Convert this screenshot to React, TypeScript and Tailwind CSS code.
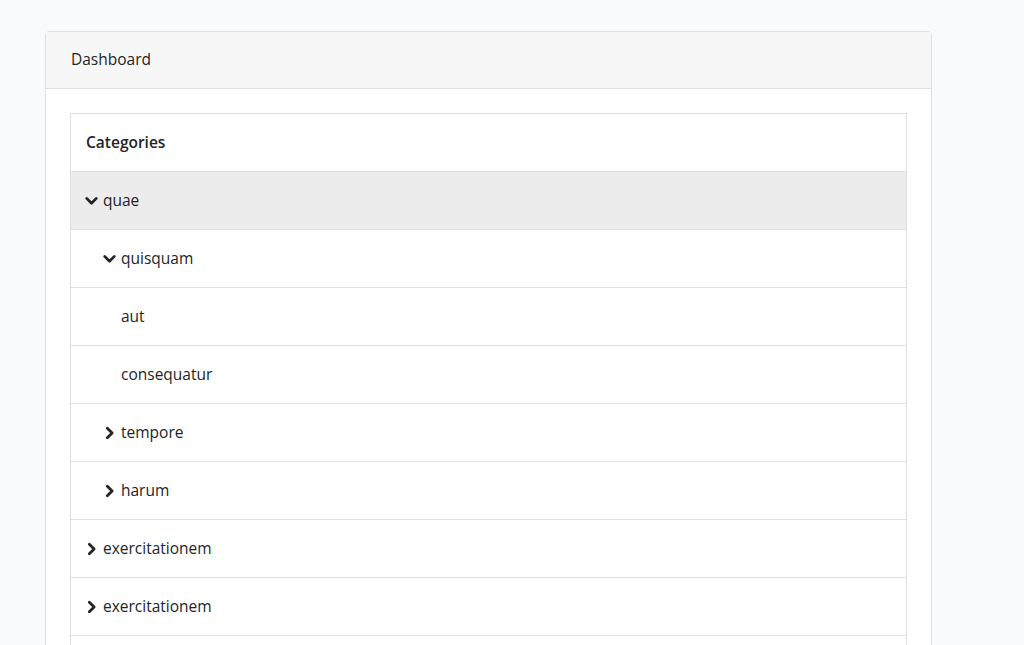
const ROWS: { label: string; level: number; icon?: "down" | "right"; active?: boolean }[] = [
  { label: "quae", level: 0, icon: "down", active: true },
  { label: "quisquam", level: 1, icon: "down" },
  { label: "aut", level: 1 },
  { label: "consequatur", level: 1 },
  { label: "tempore", level: 1, icon: "right" },
  { label: "harum", level: 1, icon: "right" },
  { label: "exercitationem", level: 0, icon: "right" },
  { label: "exercitationem", level: 0, icon: "right" },
  { label: "", level: 0 },
];

function Chevron({ dir }: { dir: "down" | "right" }) {
  return (
    <svg viewBox="0 0 16 16" className="h-[14px] w-[15px]" fill="none" stroke="#212529" strokeWidth="3.2" strokeLinecap="round" strokeLinejoin="round">
      {dir === "down" ? <path d="M2.5 5l5.5 5.5 5.5-5.5" /> : <path d="M5.5 2.5l5.5 5.5-5.5 5.5" />}
    </svg>
  );
}

export default function App() {
  return (
    <div className="h-[645px] overflow-hidden bg-[#f8fafc] pt-[31px] pl-[45px] text-[#212529]" style={{ fontFamily: "'Open Sans', 'Noto Sans', sans-serif" }}>
      <div className="w-[887px] rounded border border-[#dfdfdf] bg-white">
        <div className="flex h-[57px] items-center border-b border-[#dfdfdf] bg-[#f7f7f7] px-[25px] text-[15.5px]">Dashboard</div>
        <div className="p-[24px]">
          <div className="border border-[#dfdfdf]">
            <div className="flex h-[57px] items-center px-[15px] text-[15.5px] font-semibold">Categories</div>
            {ROWS.map((r, i) => (
              <div
                key={i}
                className={`flex h-[58px] items-center border-t border-[#dfdfdf] text-[15.5px] ${r.active ? "bg-[#ececec]" : "bg-white"}`}
                style={{ paddingLeft: 13 + r.level * 18 }}
              >
                <span className="flex w-[19px] justify-start">{r.icon && <Chevron dir={r.icon} />}</span>
                <span>{r.label}</span>
              </div>
            ))}
          </div>
        </div>
      </div>
    </div>
  );
}
